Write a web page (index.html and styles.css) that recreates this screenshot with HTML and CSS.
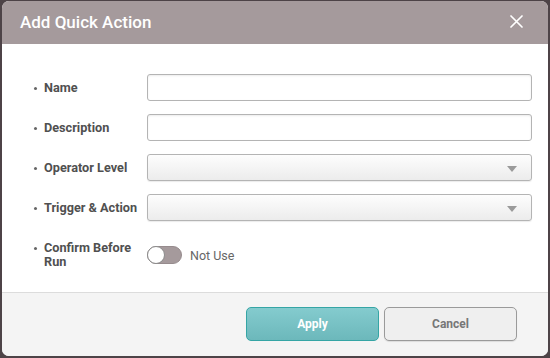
FILE: index.html
```html
<!DOCTYPE html>
<html lang="en">
<head>
    <meta charset="UTF-8">
    <meta name="viewport" content="width=device-width, initial-scale=1.0">
    <title>Add Quick Action</title>
    <link rel="stylesheet" href="styles.css">
</head>
<body>

    <div class="dialog">
        <!-- Cabeçalho -->
        <div class="dialog-header">
            <h2>Add Quick Action</h2>
            <button class="close-btn" type="button" aria-label="Close">
                <svg width="13" height="13" viewBox="0 0 13 13">
                    <path d="M1 1 L12 12 M12 1 L1 12" stroke="#fff" stroke-width="1.7" stroke-linecap="round"/>
                </svg>
            </button>
        </div>

        <!-- Formulário -->
        <form class="dialog-body">
            <div class="form-row">
                <label class="field-label">Name</label>
                <input class="text-input" type="text">
            </div>
            <div class="form-row">
                <label class="field-label">Description</label>
                <input class="text-input" type="text">
            </div>
            <div class="form-row">
                <label class="field-label">Operator Level</label>
                <div class="select-box"><i></i></div>
            </div>
            <div class="form-row">
                <label class="field-label">Trigger &amp; Action</label>
                <div class="select-box"><i></i></div>
            </div>
            <div class="form-row toggle-row">
                <label class="field-label">Confirm Before Run</label>
                <div class="toggle">
                    <span class="toggle-track"><span class="toggle-knob"></span></span>
                    <span class="toggle-text">Not Use</span>
                </div>
            </div>
        </form>

        <!-- Rodapé -->
        <div class="dialog-footer">
            <button class="btn btn-apply" type="button">Apply</button>
            <button class="btn btn-cancel" type="button">Cancel</button>
        </div>
    </div>

</body>
</html>
```

FILE: styles.css
```css
* {
    margin: 0;
    padding: 0;
    box-sizing: border-box;
    font-family: "Roboto", "Liberation Sans", sans-serif;
}

body {
    width: 550px;
    height: 358px;
    background: #4d4347;
    padding: 1px 2px 2px 2px;
    overflow: hidden;
}

.dialog {
    width: 546px;
    height: 355px;
    background: #fff;
    border-radius: 7px;
    overflow: hidden;
    display: flex;
    flex-direction: column;
}

.dialog-header {
    height: 43px;
    background: #a59a9c;
    display: flex;
    align-items: center;
    justify-content: space-between;
    padding: 0 25px 0 18px;
}

.dialog-header h2 {
    color: #fff;
    font-size: 17px;
    font-weight: 500;
    margin-top: -2px;
}

.close-btn {
    background: none;
    border: none;
    display: flex;
    margin-top: -2px;
}

.dialog-body {
    flex: 1;
    padding: 30px 16px 0 31px;
    display: flex;
    flex-direction: column;
    gap: 13px;
}

.form-row {
    display: flex;
    align-items: center;
    height: 27px;
}

.field-label {
    width: 114px;
    flex-shrink: 0;
    color: #505050;
    font-size: 12.7px;
    font-weight: 700;
    line-height: 14px;
    padding-left: 11px;
    position: relative;
}

.field-label::before {
    content: "";
    position: absolute;
    left: 1px;
    top: 6px;
    width: 3px;
    height: 3px;
    border-radius: 50%;
    background: #666;
}

.text-input,
.select-box {
    flex: 1;
    height: 27px;
    border: 1px solid #b4b4b4;
    border-radius: 3px;
    background: #fff;
    box-shadow: inset 0 1px 2px rgba(0, 0, 0, 0.08);
}

.text-input:focus {
    outline: none;
}

.select-box {
    position: relative;
    background: linear-gradient(#fdfdfd, #ececec);
    box-shadow: 0 1px 1px rgba(0, 0, 0, 0.08);
}

.select-box i {
    position: absolute;
    right: 14px;
    top: 11px;
    border-left: 5px solid transparent;
    border-right: 5px solid transparent;
    border-top: 6px solid #9a9a9a;
}

.toggle-row {
    height: 28px;
    margin-top: 7px;
}

.toggle {
    display: flex;
    align-items: center;
    gap: 8px;
}

.toggle-track {
    position: relative;
    width: 35px;
    height: 18px;
    border-radius: 9px;
    background: #a59a9c;
    border: 1px solid #968b8d;
}

.toggle-knob {
    position: absolute;
    left: -1px;
    top: -1px;
    width: 18px;
    height: 18px;
    border-radius: 50%;
    background: #fff;
    border: 1px solid #8a8a8a;
}

.toggle-text {
    color: #666;
    font-size: 12.5px;
}

.dialog-footer {
    height: 64px;
    background: #f4f4f4;
    border-top: 1px solid #dcdcdc;
    display: flex;
    justify-content: flex-end;
    gap: 5px;
    padding: 14px 31px 0 0;
}

.btn {
    width: 133px;
    height: 34px;
    border-radius: 5px;
    font-size: 12px;
    font-weight: 700;
    cursor: pointer;
}

.btn-apply {
    background: linear-gradient(#84cbce, #6cb8bb);
    border: 1px solid #35a5a5;
    color: #fff;
}

.btn-cancel {
    background: #efefef;
    border: 1px solid #9a9a9a;
    color: #777;
    box-shadow: 0 1px 1px rgba(0, 0, 0, 0.1);
}
```
